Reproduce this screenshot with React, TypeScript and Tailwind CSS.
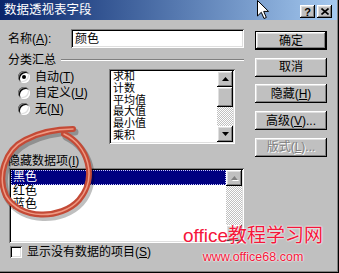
import { FunctionComponent, ReactNode } from "react";

const raised =
  "shadow-[inset_-1px_-1px_#000,inset_1px_1px_#fff,inset_-2px_-2px_#808080,inset_2px_2px_#dfdfdf]";
const sunken =
  "shadow-[inset_1px_1px_#808080,inset_-1px_-1px_#fff,inset_2px_2px_#000,inset_-2px_-2px_#dfdfdf]";

const Arrow = ({ down, off }: { down?: boolean; off?: boolean }) => (
  <svg width="7" height="4" viewBox="0 0 7 4" className={off ? "drop-shadow-[1px_1px_0_#fff]" : ""}>
    <polygon
      points={down ? "0,0 7,0 3.5,4" : "3.5,0 7,4 0,4"}
      fill={off ? "#808080" : "#000"}
    />
  </svg>
);

const ScrollBtn = ({ down, off }: { down?: boolean; off?: boolean }) => (
  <div className={`h-[16px] w-[16px] bg-[#c0c0c0] flex items-center justify-center shrink-0 ${raised}`}>
    <Arrow down={down} off={off} />
  </div>
);

const Track = ({ className = "" }: { className?: string }) => (
  <div
    className={`bg-[image:repeating-conic-gradient(#c0c0c0_0_25%,#ffffff_0_50%)] bg-size-[2px_2px] ${className}`}
  />
);

const Key = ({ children }: { children: ReactNode }) => (
  <span>
    (<span className="underline">{children}</span>)
  </span>
);

const Button = ({ children, isDefault, off }: { children: ReactNode; isDefault?: boolean; off?: boolean }) => (
  <div
    className={`h-[19px] w-[72px] flex items-center justify-center ${isDefault ? "border border-black" : ""}`}
  >
    <div
      className={`w-full h-full flex items-center justify-center ${raised} ${
        off ? "text-[#808080] [text-shadow:1px_1px_0_#fff]" : "text-black"
      }`}
    >
      {children}
    </div>
  </div>
);

const Radio = ({ on, children }: { on?: boolean; children: ReactNode }) => (
  <div className="h-[16px] flex items-center gap-[5px]">
    <div className="w-[12px] h-[12px] rounded-full bg-white flex items-center justify-center shadow-[inset_1px_1px_#808080,inset_-1px_-1px_#fff,inset_2px_2px_#000,inset_-2px_-2px_#dfdfdf]">
      {on && <div className="w-[4px] h-[4px] rounded-full bg-black" />}
    </div>
    <span>{children}</span>
  </div>
);

const loop =
  "M64 134 C88 145 98 178 79 200 C61 220 20 220 6 196 C-3 176 5 150 25 140 C40 132 58 129 73 129";

const App: FunctionComponent = () => {
  return (
    <div className="relative w-[339px] h-[273px] overflow-hidden bg-[#c0c0c0] text-[12px] leading-[12px] text-black font-['Liberation_Sans','Noto_Sans_CJK_SC',sans-serif] shadow-[inset_-1px_-1px_#000,inset_-2px_-2px_#808080]">
      {/* title bar */}
      <div className="h-[20px] mr-[2px] flex items-start bg-linear-to-r from-[#0a246a] to-[#a6caf0]">
        <span className="pl-[4px] pt-[4px] text-white text-[12.5px]">数据透视表字段</span>
        <div className="ml-auto mr-[5px] mt-[5px] flex gap-[2px]">
          <div className={`w-[15px] h-[13px] bg-[#c0c0c0] flex items-center justify-center font-bold text-[11px] ${raised}`}>
            ?
          </div>
          <div className={`w-[15px] h-[13px] bg-[#c0c0c0] flex items-center justify-center ${raised}`}>
            <svg width="8" height="7" viewBox="0 0 8 7">
              <path d="M0.5 0.5 L7.5 6.5 M7.5 0.5 L0.5 6.5" stroke="#000" strokeWidth="1.6" />
            </svg>
          </div>
        </div>
      </div>

      <div className="flex flex-row pl-[8px] pt-[9px]">
        {/* left column */}
        <div className="w-[236px] flex flex-col">
          <div className="h-[19px] flex items-center">
            <span className="w-[63px]">
              名称<Key>A</Key>:
            </span>
            <div className={`w-[173px] h-[19px] bg-white flex items-center pl-[4px] ${sunken}`}>颜色</div>
          </div>

          <div className="mt-[6px] h-[12px] flex items-center">
            <span>分类汇总</span>
            <div className="flex-1 ml-[5px] h-[2px] border-t border-t-[#808080] border-b border-b-white" />
          </div>

          <div className="mt-[3px] flex flex-row">
            <div className="w-[101px] pl-[10px] flex flex-col">
              <Radio on>
                自动<Key>T</Key>
              </Radio>
              <Radio>
                自定义<Key>U</Key>
              </Radio>
              <Radio>
                无<Key>N</Key>
              </Radio>
            </div>
            <div className={`w-[126px] h-[75px] bg-white p-[2px] flex flex-row ${sunken}`}>
              <div className="flex-1 overflow-hidden pl-[2px] text-[11px] leading-[11.8px]">
                <div>求和</div>
                <div>计数</div>
                <div>平均值</div>
                <div>最大值</div>
                <div>最小值</div>
                <div>乘积</div>
              </div>
              <div className="w-[16px] flex flex-col">
                <ScrollBtn />
                <div className={`h-[20px] bg-[#c0c0c0] ${raised}`} />
                <Track className="flex-1" />
                <ScrollBtn down />
              </div>
            </div>
          </div>

          <div className="mt-[11px] h-[12px]">
            隐藏数据项<Key>I</Key>
          </div>
          <div className={`mt-[1px] ml-[1px] w-[235px] h-[75px] bg-white p-[2px] flex flex-row ${sunken}`}>
            <div className="flex-1 leading-[13px]">
              <div className="bg-[#000080] text-white pl-[1px] border border-dotted border-[#c8c8ff]">黑色</div>
              <div className="pl-[2px]">红色</div>
              <div className="pl-[2px]">蓝色</div>
            </div>
            <div className="w-[16px] flex flex-col">
              <ScrollBtn off />
              <Track className="flex-1" />
              <ScrollBtn down off />
            </div>
          </div>

          <div className="mt-[3px] h-[12px] flex items-center gap-[5px] pl-[2px]">
            <div className={`w-[12px] h-[12px] bg-white ${sunken}`} />
            <span>
              显示没有数据的项目<Key>S</Key>
            </span>
          </div>
        </div>

        {/* right column */}
        <div className="ml-[11px] mt-[2px] flex flex-col gap-[7.7px]">
          <Button isDefault>确定</Button>
          <Button>取消</Button>
          <Button>
            隐藏<Key>H</Key>
          </Button>
          <Button>
            高级<Key>V</Key>...
          </Button>
          <Button off>
            版式<Key>L</Key>...
          </Button>
        </div>
      </div>

      {/* red hand-drawn ellipse */}
      <svg className="absolute left-0 top-0 pointer-events-none" width="110" height="230" viewBox="0 0 110 230">
        <path d={loop} transform="translate(2,3)" fill="none" stroke="rgba(0,0,0,0.25)" strokeWidth="7" strokeLinecap="round" />
        <path d={loop} fill="none" stroke="#c44a36" strokeWidth="6" strokeLinecap="round" />
        <path d={loop} fill="none" stroke="#ee9a84" strokeWidth="1.5" strokeLinecap="round" />
      </svg>

      {/* watermark */}
      <div className="absolute left-[183px] top-[225px] flex flex-col items-center text-[#f5163a] [text-shadow:0_0_2px_#fff,0_0_2px_#fff]">
        <span className="text-[19px] leading-[22px]">office教程学习网</span>
        <span className="text-[12.5px] leading-[14px] mt-[3px]">www.office68.com</span>
      </div>

      {/* mouse cursor */}
      <svg className="absolute left-[257px] top-0" width="13" height="20" viewBox="0 0 13 20">
        <path d="M0.5 0.5 L0.5 16 L4.3 12.3 L7 18.5 L9.3 17.5 L6.7 11.4 L11.5 11.4 Z" fill="#fff" stroke="#000" strokeWidth="1" />
      </svg>
    </div>
  );
};

export default App;
